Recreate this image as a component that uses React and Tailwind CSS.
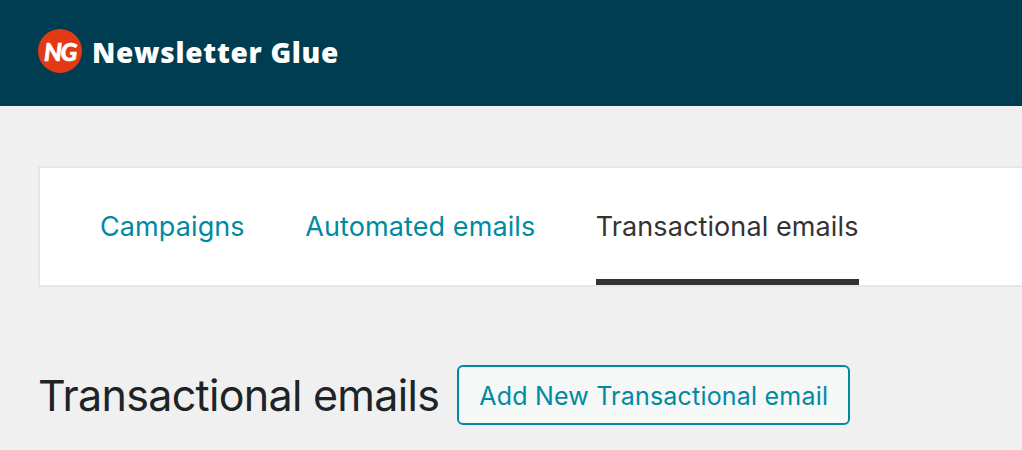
export default function App() {
  return (
    <div className="h-[450px] w-[1022px] overflow-hidden bg-[#f0f0f0] font-['Inter',sans-serif]">
      <header className="flex h-[106px] items-start gap-[10px] bg-[#003d50] pl-[38px] pt-[29px]">
        <div className="flex h-[44px] w-[44px] items-center justify-center rounded-full bg-[#e23a14]">
          <span className="font-['Lato',sans-serif] text-[25px] font-black italic leading-none tracking-[-1.5px] text-white [-webkit-text-stroke:0.6px_white]">NG</span>
        </div>
        <span className="mt-[4px] font-['Open_Sans',sans-serif] text-[28px] font-extrabold leading-[38px] tracking-[0.72px] text-white">Newsletter Glue</span>
      </header>
      <nav className="ml-[38px] mt-[60px] flex h-[121px] gap-[60.5px] border-2 border-r-0 border-[#e6e6ea] bg-white pl-[60px] text-[27px] tracking-[0.1px]">
        <a className="pt-[42px] leading-[34px] text-[#008aa2]">Campaigns</a>
        <a className="pt-[42px] leading-[34px] text-[#008aa2]">Automated emails</a>
        <a className="h-[117px] border-b-[6px] border-[#333333] pt-[42px] leading-[34px] text-[#333333]">Transactional emails</a>
      </nav>
      <div className="ml-[38px] mt-[78px] flex items-center gap-[18px]">
        <h1 className="text-[43px] font-normal leading-[60px] tracking-[-0.7px] text-[#1d2327]">Transactional emails</h1>
        <button className="h-[60px] rounded-[6px] border-2 border-[#008aa2] bg-[#f6f7f7] px-[20px] pt-[3px] text-[25px] tracking-[0.2px] text-[#008aa2]">Add New Transactional email</button>
      </div>
    </div>
  );
}
